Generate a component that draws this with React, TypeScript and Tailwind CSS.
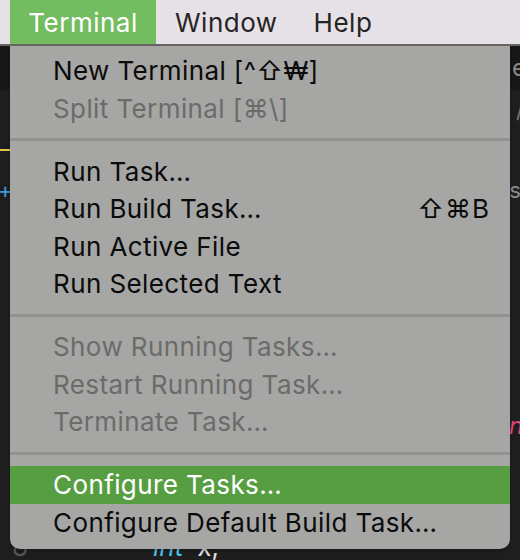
import React from 'react'

type Item = {
  label: string
  shortcut?: string
  disabled?: boolean
  active?: boolean
}

const groups: Item[][] = [
  [
    { label: 'New Terminal [^⇧₩]' },
    { label: 'Split Terminal [⌘\\]', disabled: true },
  ],
  [
    { label: 'Run Task…' },
    { label: 'Run Build Task…', shortcut: '⇧⌘B' },
    { label: 'Run Active File' },
    { label: 'Run Selected Text' },
  ],
  [
    { label: 'Show Running Tasks…', disabled: true },
    { label: 'Restart Running Task…', disabled: true },
    { label: 'Terminate Task…', disabled: true },
  ],
  [
    { label: 'Configure Tasks…', active: true },
    { label: 'Configure Default Build Task…' },
  ],
]

function MenuRow({ item }: { item: Item }) {
  const color = item.active
    ? 'bg-[#579e42] text-white'
    : item.disabled
      ? 'text-[#6b6b6a]'
      : 'text-[#0b0b0b]'
  return (
    <div className={`flex h-[37.5px] items-center justify-between pl-[43px] pr-[20px] ${color}`}>
      <span>{item.label}</span>
      {item.shortcut && <span className="tracking-[1px]">{item.shortcut}</span>}
    </div>
  )
}

export default function App() {
  return (
    <div
      className="relative h-[560px] w-[520px] overflow-hidden bg-[#1e1e1e]"
      style={{ fontFamily: 'Inter, "Noto Sans", "DejaVu Sans", sans-serif' }}
    >
      {/* menu bar */}
      <div className="flex h-[44px] items-center bg-[#e6e1e6] text-[26px] tracking-[0.5px] text-[#242424]">
        <div className="ml-[10px] flex h-full w-[146px] items-center justify-center bg-[#73bc5f] text-white">
          Terminal
        </div>
        <div className="ml-[19px]">Window</div>
        <div className="ml-[36px]">Help</div>
      </div>
      <div className="h-[2px] bg-[#676767]" />

      {/* editor behind the menu */}
      <div className="flex h-[44px] items-center justify-end bg-[#171717] text-[24px] text-[#8a8a8a]">
        <span className="-mr-[6px]">e</span>
      </div>
      <div className="flex h-[40px] items-center justify-end text-[22px] text-[#777]">
        <span className="-mr-[4px]">/</span>
      </div>
      <div className="flex h-[40px] flex-col justify-center">
        <div className="h-[2px] w-[10px] bg-[#e6c84a]" />
      </div>
      <div className="flex h-[40px] items-center justify-between text-[22px]">
        <span className="-ml-[2px] text-[#3f9ad6]">+</span>
        <span className="-mr-[8px] text-[#8c8c8c]">st</span>
      </div>
      <div className="h-[196px]" />
      <div className="flex h-[40px] items-center justify-end text-[24px] italic text-[#e0457b]">
        <span className="-mr-[10px]">n.</span>
      </div>
      <div className="h-[86px]" />
      <div className="flex h-[36px] items-start text-[26px] leading-[30px]">
        <span className="w-[30px] pl-[12px] text-[#555]">8</span>
        <span className="ml-[123px] italic text-[#4fc1e9]">int</span>
        <span className="ml-[14px] text-[#e0e0e0]">x,</span>
      </div>

      {/* dropdown */}
      <div className="absolute left-[10px] top-[46px] w-[500px] rounded-b-[10px] bg-[#a6a6a4] pb-[8px] pt-[6px] text-[26px] tracking-[0.4px] shadow-[0_2px_4px_rgba(0,0,0,0.25)]">
        {groups.map((g, gi) => (
          <div key={gi}>
            {gi > 0 && (
              <div className="flex h-[25.5px] items-center">
                <div className="h-[3px] w-full bg-[#929291]" />
              </div>
            )}
            {g.map((it) => (
              <MenuRow key={it.label} item={it} />
            ))}
          </div>
        ))}
      </div>
    </div>
  )
}
